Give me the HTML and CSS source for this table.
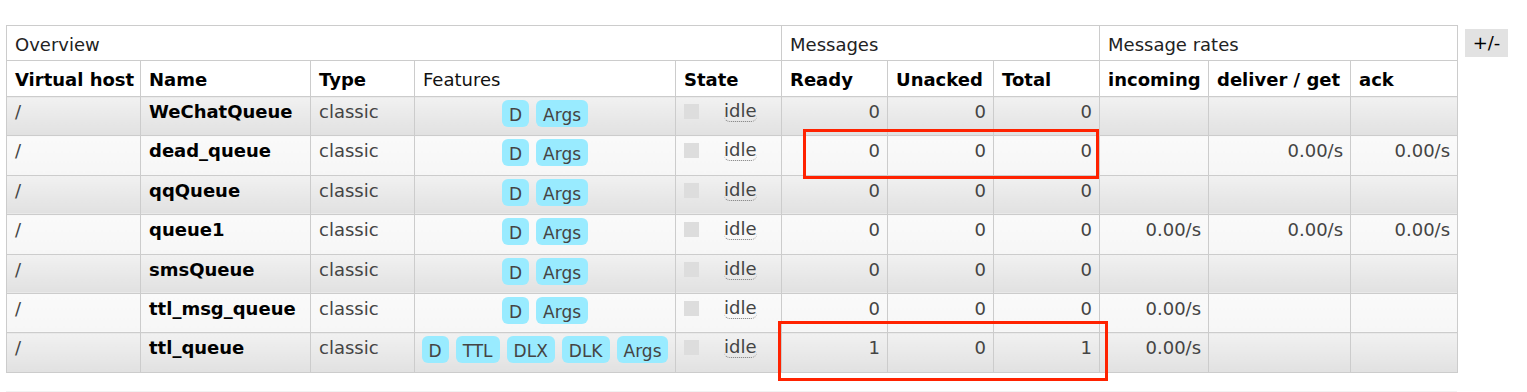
FILE: index.html
```html
<!DOCTYPE html>
<html>
<head>
<meta charset="utf-8">
<link rel="stylesheet" href="styles.css">
</head>
<body>
<div class="page">
  <div class="area">
    <table class="queues">
      <colgroup>
        <col class="c-vhost"><col class="c-name"><col class="c-type"><col class="c-feat"><col class="c-state">
        <col class="c-num"><col class="c-num2"><col class="c-num"><col class="c-in"><col class="c-del"><col class="c-ack">
      </colgroup>
      <thead>
        <tr class="group">
          <th colspan="5">Overview</th>
          <th colspan="3">Messages</th>
          <th colspan="3">Message rates</th>
        </tr>
        <tr class="cols">
          <th>Virtual host</th>
          <th>Name</th>
          <th>Type</th>
          <th class="plain">Features</th>
          <th>State</th>
          <th>Ready</th>
          <th>Unacked</th>
          <th>Total</th>
          <th>incoming</th>
          <th>deliver / get</th>
          <th>ack</th>
        </tr>
      </thead>
      <tbody>
        <tr class="alt1">
          <td>/</td><td class="qname">WeChatQueue</td><td>classic</td>
          <td><div class="feats"><span class="badge">D</span><span class="badge">Args</span></div></td>
          <td><div class="state"><span class="sq"></span><span class="idle">idle</span></div></td>
          <td class="r">0</td><td class="r">0</td><td class="r">0</td>
          <td class="r"></td><td class="r"></td><td class="r"></td>
        </tr>
        <tr class="alt2">
          <td>/</td><td class="qname">dead_queue</td><td>classic</td>
          <td><div class="feats"><span class="badge">D</span><span class="badge">Args</span></div></td>
          <td><div class="state"><span class="sq"></span><span class="idle">idle</span></div></td>
          <td class="r">0</td><td class="r">0</td><td class="r">0</td>
          <td class="r"></td><td class="r">0.00/s</td><td class="r">0.00/s</td>
        </tr>
        <tr class="alt1">
          <td>/</td><td class="qname">qqQueue</td><td>classic</td>
          <td><div class="feats"><span class="badge">D</span><span class="badge">Args</span></div></td>
          <td><div class="state"><span class="sq"></span><span class="idle">idle</span></div></td>
          <td class="r">0</td><td class="r">0</td><td class="r">0</td>
          <td class="r"></td><td class="r"></td><td class="r"></td>
        </tr>
        <tr class="alt2">
          <td>/</td><td class="qname">queue1</td><td>classic</td>
          <td><div class="feats"><span class="badge">D</span><span class="badge">Args</span></div></td>
          <td><div class="state"><span class="sq"></span><span class="idle">idle</span></div></td>
          <td class="r">0</td><td class="r">0</td><td class="r">0</td>
          <td class="r">0.00/s</td><td class="r">0.00/s</td><td class="r">0.00/s</td>
        </tr>
        <tr class="alt1">
          <td>/</td><td class="qname">smsQueue</td><td>classic</td>
          <td><div class="feats"><span class="badge">D</span><span class="badge">Args</span></div></td>
          <td><div class="state"><span class="sq"></span><span class="idle">idle</span></div></td>
          <td class="r">0</td><td class="r">0</td><td class="r">0</td>
          <td class="r"></td><td class="r"></td><td class="r"></td>
        </tr>
        <tr class="alt2">
          <td>/</td><td class="qname">ttl_msg_queue</td><td>classic</td>
          <td><div class="feats"><span class="badge">D</span><span class="badge">Args</span></div></td>
          <td><div class="state"><span class="sq"></span><span class="idle">idle</span></div></td>
          <td class="r">0</td><td class="r">0</td><td class="r">0</td>
          <td class="r">0.00/s</td><td class="r"></td><td class="r"></td>
        </tr>
        <tr class="alt1">
          <td>/</td><td class="qname">ttl_queue</td><td>classic</td>
          <td><div class="feats"><span class="badge">D</span><span class="badge">TTL</span><span class="badge">DLX</span><span class="badge">DLK</span><span class="badge">Args</span></div></td>
          <td><div class="state"><span class="sq"></span><span class="idle">idle</span></div></td>
          <td class="r">1</td><td class="r">0</td><td class="r">1</td>
          <td class="r">0.00/s</td><td class="r"></td><td class="r"></td>
        </tr>
      </tbody>
    </table>
    <div class="next"></div>
  </div>
  <button class="toggle">+/-</button>
</div>
<div class="mark mark-1"></div>
<div class="mark mark-2"></div>
</body>
</html>
```
FILE: styles.css
```css
html, body {
  margin: 0;
  padding: 0;
  background: #fff;
}
body {
  font-family: "DejaVu Sans", Verdana, sans-serif;
  font-size: 18px;
  color: #444;
}
.page {
  display: flex;
  align-items: flex-start;
  padding: 25px 0 0 6px;
}
.area {
  width: 1451px;
}
.queues {
  width: 1451px;
  table-layout: fixed;
  border-collapse: collapse;
  border: 1px solid #ccc;
}
.c-vhost { width: 134px; }
.c-name { width: 170px; }
.c-type { width: 104px; }
.c-feat { width: 261px; }
.c-state { width: 106px; }
.c-num { width: 106px; }
.c-num2 { width: 106px; }
.c-in { width: 109px; }
.c-del { width: 142px; }
.c-ack { width: 107px; }

.queues th, .queues td {
  border: 1px solid #ccc;
  padding: 0 8px;
  vertical-align: top;
  text-align: left;
  line-height: 21px;
  white-space: nowrap;
  overflow: hidden;
}
.queues th {
  background: #fff;
  color: #000;
  padding-top: 8px;
}
.group th {
  font-weight: normal;
  color: #222;
  height: 26px;
}
.cols th {
  font-weight: bold;
  height: 27px;
}
.cols th.plain {
  font-weight: normal;
  color: #111;
}
.queues td {
  padding-top: 4px;
  height: 34.4px;
}
.alt1 td {
  background: linear-gradient(#f1f1f1, #e1e1e1);
}
.alt2 td {
  background: linear-gradient(#fafafa, #f6f6f6);
}
.queues td.r {
  text-align: right;
  padding-right: 7px;
}
.queues td.qname {
  font-weight: bold;
  color: #000;
}
.feats {
  display: flex;
  justify-content: center;
  gap: 7px;
}
.badge {
  display: block;
  margin-top: -1px;
  background: #99ebff;
  color: #444;
  font-size: 17px;
  line-height: 20px;
  padding: 5px 7px 2px;
  border-radius: 6px;
}
.state {
  display: flex;
  align-items: flex-start;
}
.sq {
  display: block;
  width: 15px;
  height: 15px;
  margin-top: 3px;
  background: #ddd;
}
.idle {
  margin-left: 25px;
  line-height: 20px;
  border-bottom: 1px dotted #777;
  border-radius: 0 0 6px 6px;
}
.next {
  margin-top: 18px;
  border-top: 1px solid #f2f2f2;
}
.toggle {
  margin: 4px 0 0 8px;
  border: 0;
  padding: 0;
  width: 43px;
  height: 28px;
  background: #e2e2e2;
  color: #000;
  font-family: "DejaVu Sans", Verdana, sans-serif;
  font-size: 18px;
  line-height: 28px;
}
.mark {
  position: absolute;
  border: 3px solid #ff2200;
  box-sizing: border-box;
}
.mark-1 {
  left: 803px;
  top: 129px;
  width: 296px;
  height: 50px;
}
.mark-2 {
  left: 778px;
  top: 321px;
  width: 330px;
  height: 60px;
}
```
